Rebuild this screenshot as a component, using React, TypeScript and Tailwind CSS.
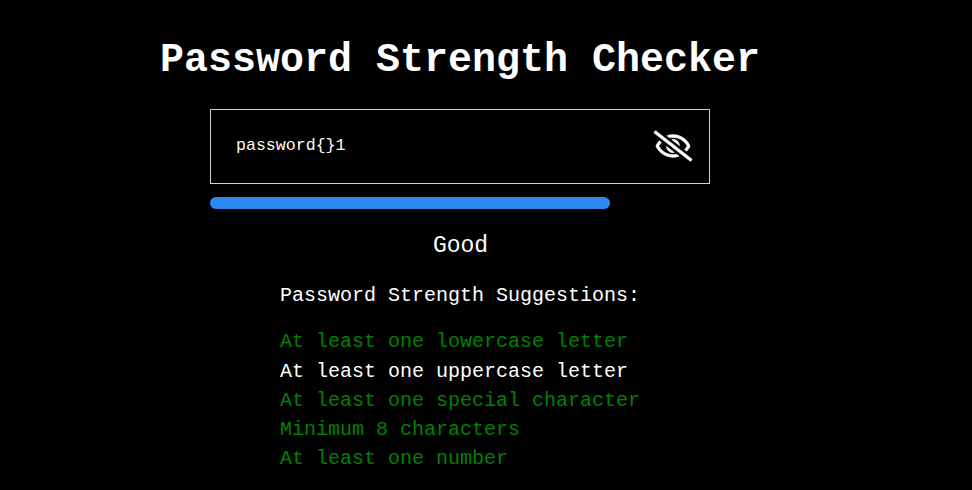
import React from "react";
import { FaRegEyeSlash } from "react-icons/fa";

const suggestions = [
  { text: "At least one lowercase letter", met: true },
  { text: "At least one uppercase letter", met: false },
  { text: "At least one special character", met: true },
  { text: "Minimum 8 characters", met: true },
  { text: "At least one number", met: true },
];

export default function App() {
  return (
    <main className="h-[490px] overflow-hidden bg-black pt-[38px] font-['Liberation_Mono',monospace] text-white">
      <div className="ml-[160px] flex w-[600px] flex-col items-center">
        <h1 className="text-[40px] leading-[45px] font-bold whitespace-nowrap">Password Strength Checker</h1>
        <div className="mt-[26px] flex h-[75px] w-[500px] items-center justify-between border border-[#d0d0d0] pr-[17px] pb-[2px] pl-[25px]">
          <input
            aria-label="Password"
            defaultValue="password{}1"
            className="w-[380px] bg-transparent text-[16.6px] leading-5 text-[#fffdf5] outline-none"
          />
          <button aria-label="Hide password">
            <FaRegEyeSlash className="block size-[38px] overflow-visible stroke-current stroke-[8]" />
          </button>
        </div>
        <div className="mt-[13px] w-[500px]">
          <div className="h-3 w-[400px] rounded-full bg-[#2f89f3]" />
        </div>
        <p className="mt-6 pl-px text-[23px] leading-[26px]">Good</p>
        <div className="mt-[25px] w-[360px] text-[20px]">
          <p className="leading-[23px] whitespace-nowrap">Password Strength Suggestions:</p>
          <ul className="mt-[20.4px]">
            {suggestions.map((s) => (
              <li key={s.text} className={`h-[29.2px] leading-[29.2px] whitespace-nowrap ${s.met ? "text-[#008000]" : "text-white"}`}>
                {s.text}
              </li>
            ))}
          </ul>
        </div>
      </div>
    </main>
  );
}
